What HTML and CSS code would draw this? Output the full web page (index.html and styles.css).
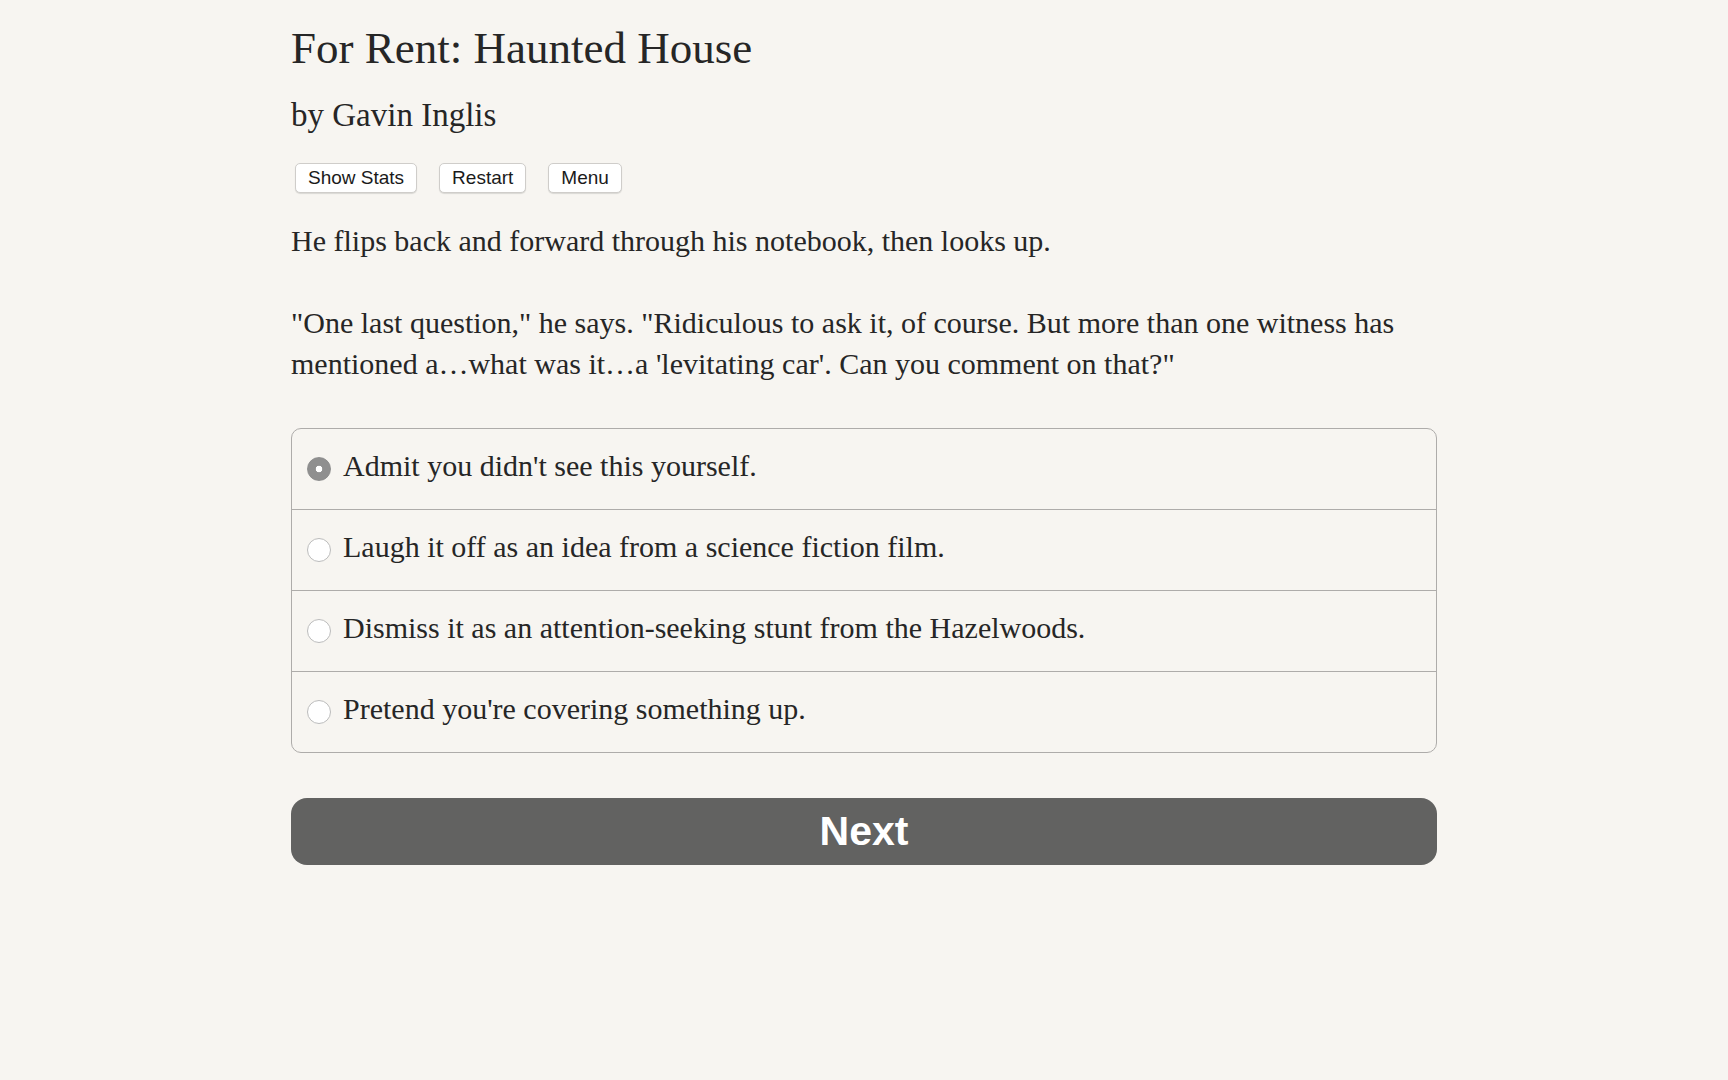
FILE: index.html
```html
<!DOCTYPE html>
<html lang="en">
<head>
<meta charset="utf-8">
<title>For Rent: Haunted House</title>
<link rel="stylesheet" href="styles.css">
</head>
<body>
<main class="page">
  <h1 class="title">For Rent: Haunted House</h1>
  <h2 class="byline">by Gavin Inglis</h2>
  <nav class="toolbar">
    <button class="tool-btn" type="button">Show Stats</button>
    <button class="tool-btn" type="button">Restart</button>
    <button class="tool-btn" type="button">Menu</button>
  </nav>
  <p class="story">He flips back and forward through his notebook, then looks up.</p>
  <p class="story story-gap">"One last question," he says. "Ridiculous to ask it, of course. But more than one witness has mentioned a…what was it…a 'levitating car'. Can you comment on that?"</p>
  <form class="choices">
    <label class="choice">
      <input class="radio" type="radio" name="choice" checked>
      <span class="choice-text">Admit you didn't see this yourself.</span>
    </label>
    <label class="choice">
      <input class="radio" type="radio" name="choice">
      <span class="choice-text">Laugh it off as an idea from a science fiction film.</span>
    </label>
    <label class="choice">
      <input class="radio" type="radio" name="choice">
      <span class="choice-text">Dismiss it as an attention-seeking stunt from the Hazelwoods.</span>
    </label>
    <label class="choice">
      <input class="radio" type="radio" name="choice">
      <span class="choice-text">Pretend you're covering something up.</span>
    </label>
  </form>
  <button class="next" type="button">Next</button>
</main>
</body>
</html>
```

FILE: styles.css
```css
html, body {
  margin: 0;
  padding: 0;
  background: #f7f5f1;
}

body {
  color: #262626;
  font-family: "Liberation Serif", "Times New Roman", serif;
}

.page {
  width: 1146px;
  margin: 0 auto;
  padding-top: 21px;
  display: flex;
  flex-direction: column;
}

.title {
  margin: 0;
  font-size: 45px;
  line-height: 54px;
  font-weight: normal;
  color: #262626;
}

.byline {
  margin: 20px 0 0;
  font-size: 33px;
  line-height: 40px;
  font-weight: normal;
  color: #262626;
}

.toolbar {
  margin-top: 28px;
  padding-left: 4px;
  display: flex;
  gap: 22px;
}

.tool-btn {
  height: 30px;
  padding: 0 12px;
  font-family: "Liberation Sans", Arial, sans-serif;
  font-size: 19px;
  color: #1a1a1a;
  background: #ffffff;
  border: 1px solid #cfcdca;
  border-radius: 5px;
  box-shadow: 0 1px 1px rgba(0, 0, 0, 0.12);
  cursor: pointer;
}

.story {
  margin: 27px 0 0;
  font-size: 30px;
  line-height: 41px;
}

.story-gap {
  margin-top: 41px;
}

.choices {
  margin: 44px 0 0;
  border: 1px solid #aeacaa;
  border-radius: 10px;
  overflow: hidden;
  display: flex;
  flex-direction: column;
}

.choice {
  display: flex;
  align-items: center;
  height: 80px;
  box-sizing: border-box;
  padding: 16px 15px 23px;
  font-size: 30px;
  line-height: 41px;
  cursor: pointer;
}

.choice + .choice {
  border-top: 1px solid #aeacaa;
  height: 81px;
}

.radio {
  appearance: none;
  -webkit-appearance: none;
  flex: none;
  width: 24px;
  height: 24px;
  margin: 6px 12px 0 0;
  border-radius: 50%;
  border: 1px solid #bcbcbc;
  background: #ffffff;
  box-sizing: border-box;
}

.radio:checked {
  border-color: #8e8e8e;
  background: radial-gradient(circle, #ffffff 0 3px, #8f8f8f 3.6px);
}

.next {
  margin-top: 45px;
  height: 67px;
  border: none;
  border-radius: 16px;
  background: #626261;
  color: #ffffff;
  font-family: "Liberation Sans", Arial, sans-serif;
  font-weight: bold;
  font-size: 41px;
  line-height: 67px;
  padding: 0;
  cursor: pointer;
}
```
